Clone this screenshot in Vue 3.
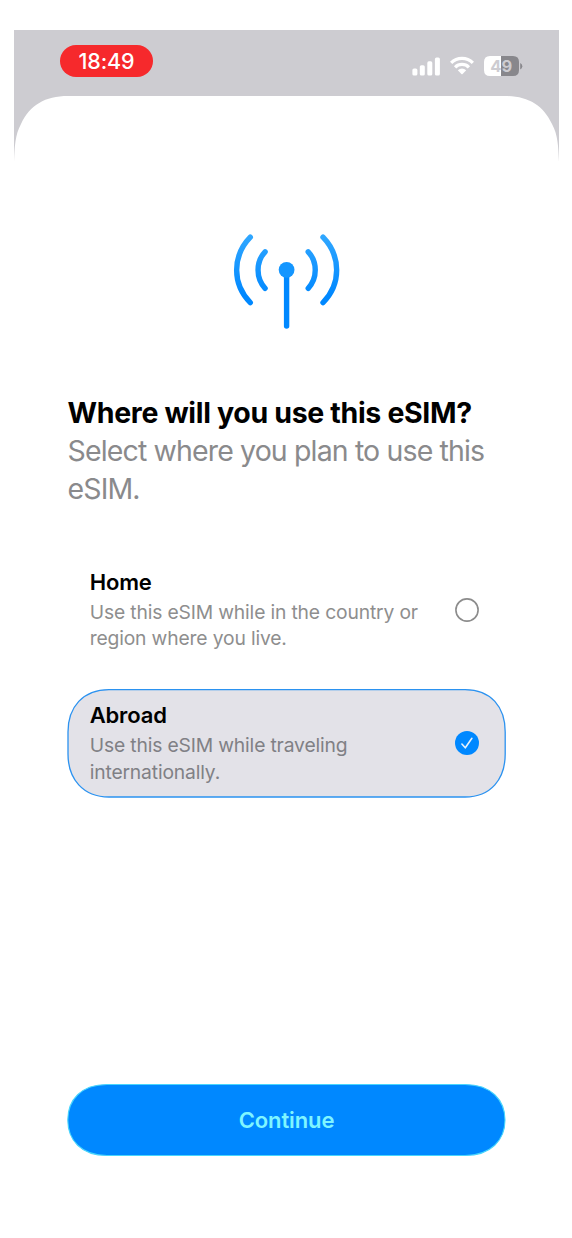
<script setup>
import { ref } from 'vue'

const selected = ref('abroad')
const options = [
  { id: 'home', title: 'Home', lines: ['Use this eSIM while in the country or', 'region where you live.'] },
  { id: 'abroad', title: 'Abroad', lines: ['Use this eSIM while traveling', 'internationally.'] },
]
</script>

<template>
  <div class="page">
    <div class="phone">
      <header class="status">
        <div class="time"><span>18:49</span></div>
        <div class="indicators">
          <svg class="signal" width="28" height="19" viewBox="0 0 28 19" fill="#fff">
            <rect x="0.4" y="11.5" width="5" height="7" rx="1.6" />
            <rect x="7.8" y="8.2" width="5" height="10.3" rx="1.6" />
            <rect x="15.3" y="4.3" width="5" height="14.2" rx="1.6" />
            <rect x="22.9" y="0.4" width="5" height="18.1" rx="1.6" />
          </svg>
          <svg class="wifi" width="24" height="19" viewBox="0 0 24 19">
            <g fill="none" stroke="#fff" stroke-width="3.3">
              <path d="M1.1 6.9 A15.4 15.4 0 0 1 22.9 6.9" />
              <path d="M5.1 11.3 A9.8 9.8 0 0 1 18.9 11.3" />
            </g>
            <path d="M7.8 14.3 Q12 10.9 16.2 14.3 L12.6 18 Q12 18.5 11.4 18 Z" fill="#fff" />
          </svg>
          <svg class="battery" width="39" height="20" viewBox="0 0 39 20">
            <path d="M17 0 H29 Q35 0 35 6 V14 Q35 20 29 20 H17 Z" fill="#88878c" />
            <path d="M17 0 H6 Q0 0 0 6 V14 Q0 20 6 20 H17 Z" fill="#fff" />
            <path d="M36.2 7 Q38.3 8 38.3 10.2 Q38.3 12.4 36.2 13.4 Z" fill="#88878c" />
            <text x="6.2" y="16" class="pct">4</text>
            <text x="17.4" y="16" class="pct">9</text>
          </svg>
        </div>
      </header>

      <main class="sheet">
        <svg class="sheet-top" width="545" height="66" viewBox="0 0 545 66">
          <path d="M0 66 C0.8 50 1 39 7 28 C16 9 31 0 54 0 H491 C514 0 529 9 538 28 C544 39 544.2 50 545 66 Z" fill="#fff" />
        </svg>
        <svg class="antenna" width="107" height="96" viewBox="0 0 107 96">
          <defs>
            <linearGradient id="blue" gradientUnits="userSpaceOnUse" x1="0" y1="0" x2="0" y2="96">
              <stop offset="0" stop-color="#32a8ff" />
              <stop offset="0.65" stop-color="#0088ff" />
              <stop offset="1" stop-color="#0088ff" />
            </linearGradient>
          </defs>
          <g fill="none" stroke="url(#blue)" stroke-width="5.4" stroke-linecap="round">
            <path d="M17.3 4.2 C-0.9 23 -0.9 51.2 17.3 69.6" />
            <path d="M32.1 18.8 C22.7 28.9 22.7 45.2 32.1 55.3" />
            <path d="M75.2 18.8 C84.6 28.9 84.6 45.2 75.2 55.3" />
            <path d="M90 4.2 C108.2 23 108.2 51.2 90 69.6" />
          </g>
          <rect x="50.9" y="36" width="5.4" height="59.8" rx="2.7" fill="#0088ff" />
          <circle cx="53.6" cy="36.8" r="7.9" fill="#1496ff" />
        </svg>

        <section class="heading">
          <h1>Where will you use this eSIM?</h1>
          <p>Select where you plan to use this<br />eSIM.</p>
        </section>

        <section class="options">
          <div v-for="o in options" :key="o.id" class="option" :class="o.id" @click="selected = o.id">
            <svg v-if="selected === o.id" class="outline" width="440" height="110" viewBox="0 0 440 110">
              <path d="M42 1.6 H398 C424 1.6 438.2 19 438.2 44 V66 C438.2 91 424 109 398 109 H42 C16 109 1 91 1 66 V44 C1 19 16 1.6 42 1.6 Z" fill="#e3e2e8" stroke="#2b92f0" stroke-width="1.3" />
            </svg>
            <div class="copy">
              <h2>{{ o.title }}</h2>
              <p><span v-for="(l, i) in o.lines" :key="i">{{ l }}</span></p>
            </div>
            <svg class="radio" width="24" height="24" viewBox="0 0 24 24" fill="none">
              <template v-if="selected === o.id">
                <circle cx="12" cy="12" r="12" fill="#0088ff" />
                <path d="M6.9 13 L10.3 16.8 L16.9 7.3" stroke="#e6f1fb" stroke-width="1.6" stroke-linecap="round" stroke-linejoin="round" />
              </template>
              <circle v-else cx="12" cy="12" r="11.1" stroke="#8c8c8c" stroke-width="1.6" />
            </svg>
          </div>
        </section>

        <button class="continue">
          <svg class="pill" width="440" height="74" viewBox="0 0 440 74">
            <path d="M40 1.5 H398 C424 1.5 438 17 438 37 C438 57 424 72.5 398 72.5 H40 C14 72.5 0.8 57 0.8 37 C0.8 17 14 1.5 40 1.5 Z" fill="#0088ff" stroke="#48d5fc" stroke-width="1.1" />
          </svg>
          <span>Continue</span>
        </button>
      </main>
    </div>
  </div>
</template>

<style>
body { background: #fff; }
</style>

<style scoped>
.page {
  box-sizing: border-box;
  width: 572px;
  height: 1238px;
  padding: 30px 13px 0 14px;
  overflow: hidden;
  font-family: Inter, "Liberation Sans", sans-serif;
}
h1, h2, p { margin: 0; }
.phone { width: 545px; background: #cdccd1; }
.status {
  box-sizing: border-box;
  height: 66px;
  padding: 15px 36.5px 0 46px;
  display: flex;
  justify-content: space-between;
}
.time {
  width: 93px;
  height: 32px;
  border-radius: 16px;
  background: #f6292c;
  color: #fff;
  font-size: 21.5px;
  line-height: 33px;
  font-weight: 500;
  letter-spacing: -0.1px;
  text-align: center;
  white-space: nowrap;
}
.indicators { display: flex; padding-top: 11px; }
.signal { margin: 0.5px 9.5px 0 0; }
.wifi { margin-right: 10px; }
.pct { font-size: 16.5px; font-weight: 700; fill: #cdccd1; }
.sheet {
  height: 1142px;
  display: flex;
  flex-direction: column;
  background: linear-gradient(#cdccd1 0 65px, #fff 65px);
}
.sheet-top { display: block; flex: none; }
.antenna { flex: none; margin: 71px 0 0 219px; }
.heading { margin: 65px 0 0 53.5px; white-space: nowrap; }
h1 {
  font-size: 28.5px;
  line-height: 37.5px;
  font-weight: 700;
  color: #000;
  letter-spacing: -0.33px;
}
.heading p {
  font-size: 28.5px;
  line-height: 38px;
  color: #8a8a8c;
  letter-spacing: -0.86px;
}
.options { margin: 47px 0 0 53px; }
.option {
  position: relative;
  box-sizing: border-box;
  width: 440px;
  height: 110px;
  padding: 12px 28px 0 22.7px;
  display: flex;
  justify-content: space-between;
}
.option + .option { margin-top: 23.5px; }
.outline { position: absolute; left: 0; top: 0; }
.copy { position: relative; white-space: nowrap; }
h2 {
  font-size: 22px;
  line-height: 30px;
  font-weight: 600;
  color: #000;
  letter-spacing: -0.15px;
}
.copy p {
  padding-top: 2px;
  font-size: 19.3px;
  line-height: 26.6px;
  color: #8e8e8e;
  letter-spacing: -0.16px;
}
.abroad .copy p { color: #808085; }
.copy p span { display: block; }
.radio { position: relative; flex: none; margin-top: 31px; }
.continue {
  position: relative;
  display: block;
  width: 440px;
  height: 74px;
  margin: 284.7px 0 0 53px;
  padding: 0;
  border: 0;
  background: none;
  font: 600 22px/74px Inter, "Liberation Sans", sans-serif;
  letter-spacing: -0.1px;
  color: #7ff5ff;
}
.pill { position: absolute; left: 0; top: 0; }
.continue span { position: relative; left: -0.5px; }
</style>
